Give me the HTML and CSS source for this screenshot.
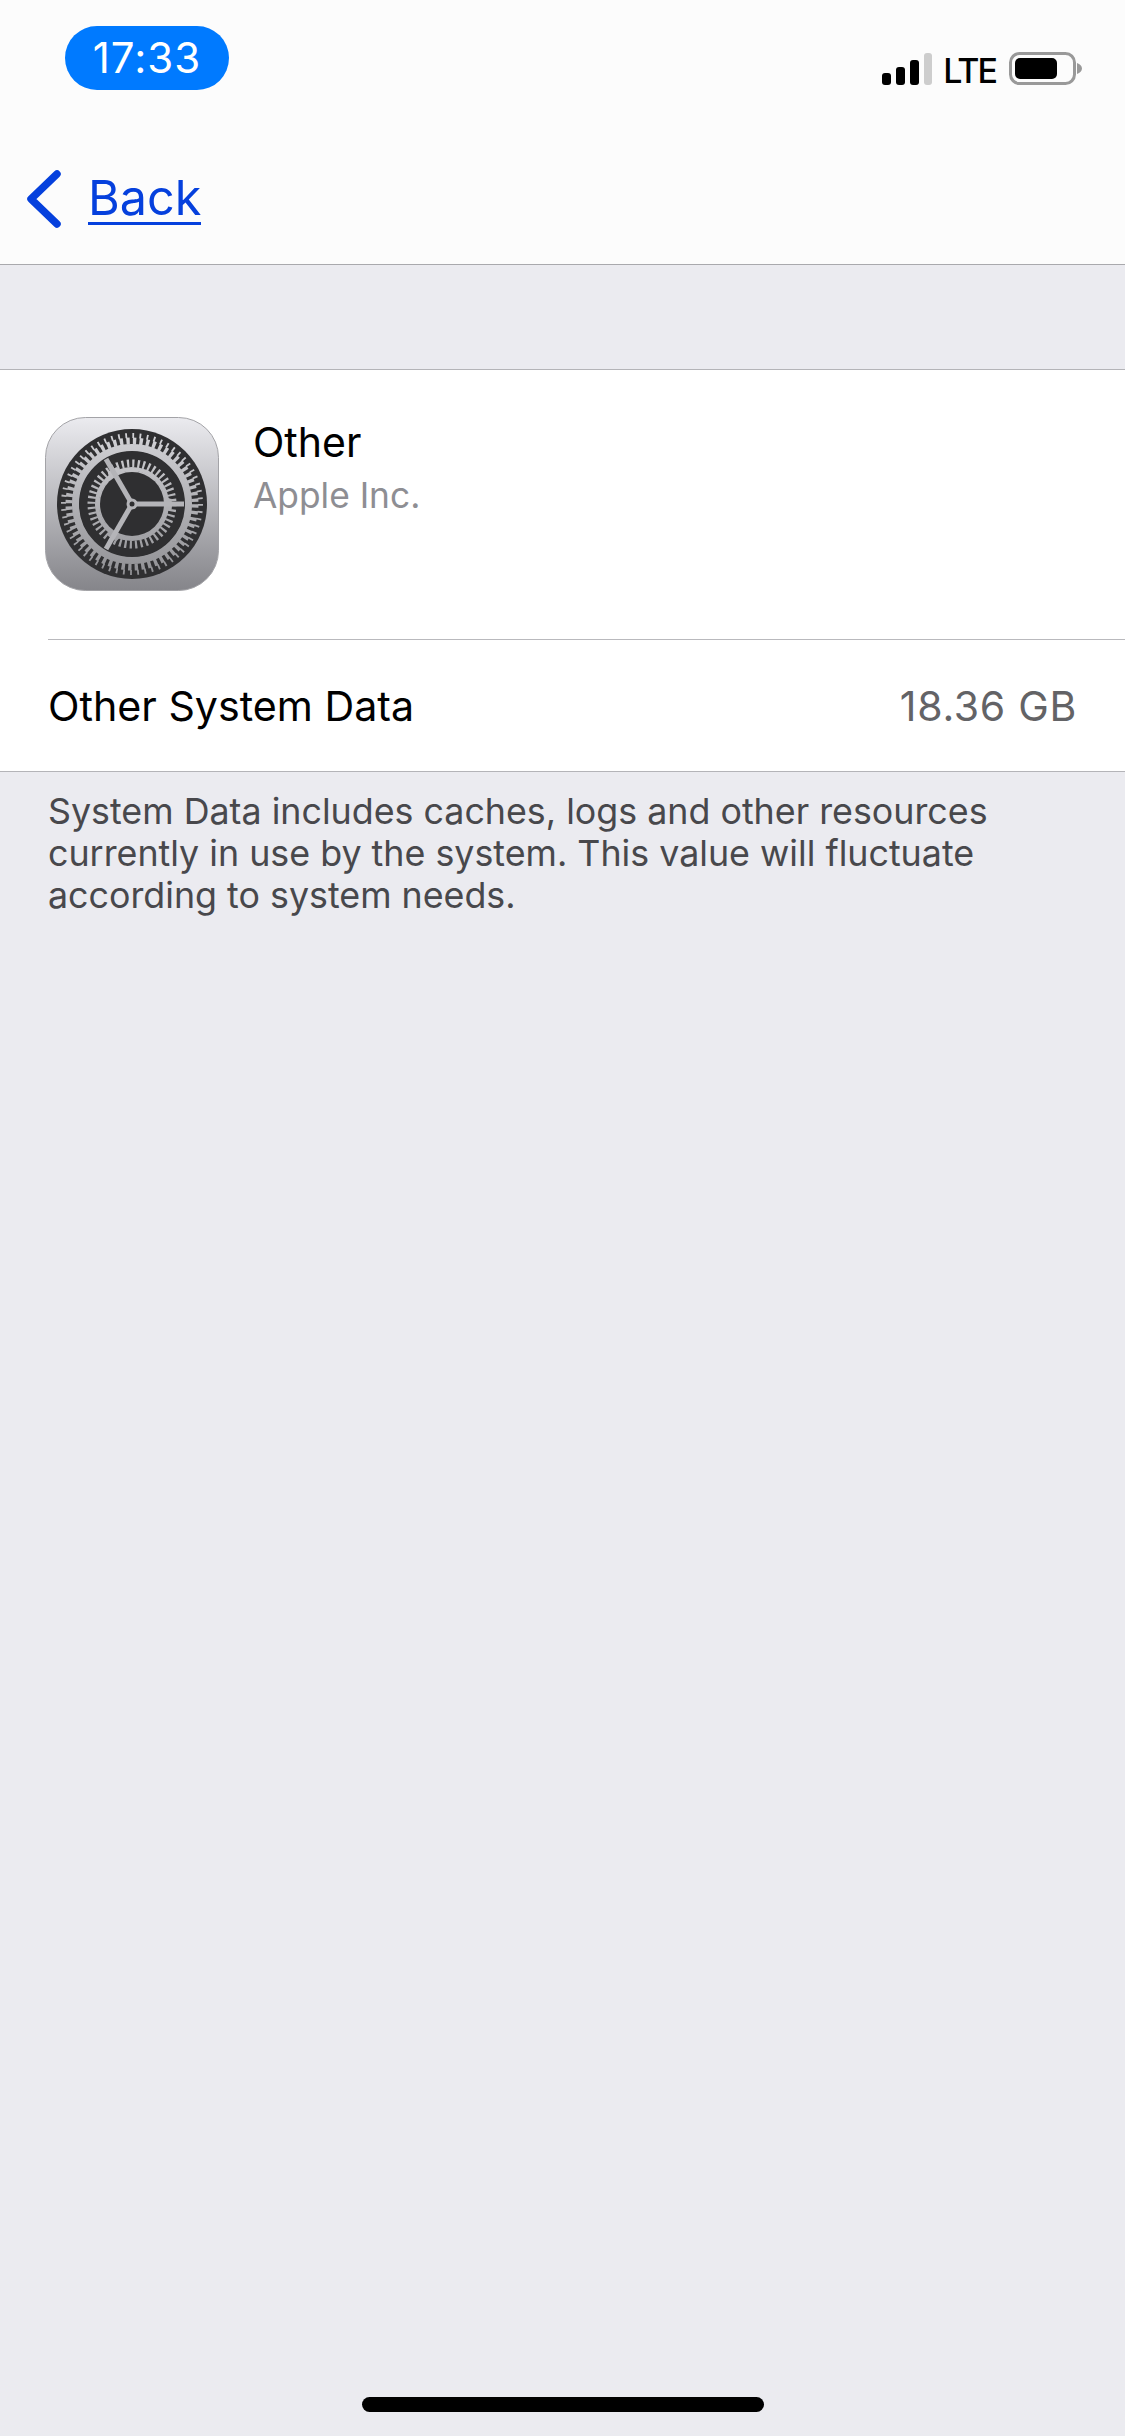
FILE: index.html
```html
<!DOCTYPE html>
<html lang="en">

<head>
    <meta charset="UTF-8">
    <meta name="viewport" content="width=device-width, initial-scale=1.0">
    <title>Other System Data</title>
    <link rel="stylesheet" href="styles.css">
</head>

<body>
    <div class="header">
        <!-- status bar -->
        <div class="status">
            <div class="time">17:33</div>
            <div class="status-right">
                <svg class="signal" width="50" height="32" viewBox="0 0 50 32">
                    <rect x="0" y="20" width="9" height="12" rx="3" fill="#000"></rect>
                    <rect x="14" y="14" width="9" height="18" rx="3" fill="#000"></rect>
                    <rect x="28" y="7" width="9" height="25" rx="3" fill="#000"></rect>
                    <rect x="42" y="0" width="8" height="32" rx="3" fill="#cdcdcd"></rect>
                </svg>
                <span class="lte">LTE</span>
                <svg class="battery" width="73" height="33" viewBox="0 0 73 33">
                    <rect x="1.5" y="1.5" width="64" height="30" rx="9" fill="none" stroke="#999" stroke-width="3"></rect>
                    <rect x="6" y="6" width="42" height="21" rx="5" fill="#000"></rect>
                    <path d="M68 11 C71 12 73 14 73 16.5 C73 19 71 21 68 22 Z" fill="#999"></path>
                </svg>
            </div>
        </div>
        <!-- nav -->
        <div class="nav">
            <svg class="chevron" width="34" height="58" viewBox="0 0 34 58">
                <path d="M30 4 L4 29 L30 54" fill="none" stroke="#0540dd" stroke-width="7.5" stroke-linecap="round" stroke-linejoin="round"></path>
            </svg>
            <a href="#" class="back">Back</a>
        </div>
    </div>

    <div class="gap"></div>

    <div class="card">
        <div class="app">
            <svg class="app-icon" width="174" height="174" viewBox="0 0 174 174">
                <defs>
                    <linearGradient id="tile" x1="0" y1="0" x2="0" y2="1">
                        <stop offset="0" stop-color="#ebebef"></stop>
                        <stop offset="1" stop-color="#85858a"></stop>
                    </linearGradient>
                    <linearGradient id="metal" gradientUnits="userSpaceOnUse" x1="0" y1="-75" x2="0" y2="75">
                        <stop offset="0" stop-color="#d4d4d8"></stop>
                        <stop offset="1" stop-color="#8f8f93"></stop>
                    </linearGradient>
                </defs>
                <rect x="0.5" y="0.5" width="173" height="173" rx="40" fill="url(#tile)" stroke="#a3a3a7"></rect>
                <g transform="translate(87 87)">
                    <circle r="75" fill="#2f2f31"></circle>
                    <!-- outer teeth, wide at the root and narrow at the tip -->
                    <circle r="68.5" fill="none" stroke="url(#metal)" stroke-width="5" stroke-dasharray="1.8 5.37"></circle>
                    <circle r="63" fill="none" stroke="url(#metal)" stroke-width="7" stroke-dasharray="3.4 3.2" stroke-dashoffset="-0.3"></circle>
                    <circle r="56.5" fill="none" stroke="url(#metal)" stroke-width="7"></circle>
                    <circle r="40" fill="url(#metal)"></circle>
                    <!-- dark slots between the spokes -->
                    <g fill="none" stroke="#2f2f31" stroke-width="19" stroke-linecap="round">
                        <path d="M-7.5 -42.3 A43 43 0 0 1 40.4 -14.7"></path>
                        <path d="M40.4 14.7 A43 43 0 0 1 -7.5 42.3"></path>
                        <path d="M-32.9 27.6 A43 43 0 0 1 -32.9 -27.6"></path>
                    </g>
                    <!-- inner teeth -->
                    <circle r="40.5" fill="none" stroke="url(#metal)" stroke-width="8" stroke-dasharray="2.2 3.1"></circle>
                    <circle r="35" fill="none" stroke="url(#metal)" stroke-width="4"></circle>
                    <circle r="32" fill="#2f2f31"></circle>
                    <!-- spokes -->
                    <g stroke="#b4b4b8" stroke-width="5">
                        <line x1="0" y1="0" x2="52" y2="0"></line>
                        <line x1="0" y1="0" x2="-26" y2="45"></line>
                        <line x1="0" y1="0" x2="-26" y2="-45"></line>
                    </g>
                    <circle r="5.5" fill="#b4b4b8"></circle>
                    <circle r="2.5" fill="#2f2f31"></circle>
                </g>
            </svg>
            <div class="app-text">
                <div class="app-name">Other</div>
                <div class="app-vendor">Apple Inc.</div>
            </div>
        </div>
        <div class="row">
            <span class="row-label">Other System Data</span>
            <span class="row-value">18.36 GB</span>
        </div>
    </div>

    <p class="note">System Data includes caches, logs and other resources currently in use by the system. This value will fluctuate according to system needs.</p>

    <div class="home-bar"></div>
</body>

</html>
```

FILE: styles.css
```css
* {
    padding: 0;
    margin: 0;
    box-sizing: border-box;
}

a {
    text-decoration: none;
}

body {
    display: flex;
    flex-direction: column;
    height: 2436px;
    background-color: #ebebf0;
    font-family: Inter, "Liberation Sans", sans-serif;
    color: #000;
    overflow: hidden;
}

.header {
    height: 265px;
    background-color: #fcfcfc;
    border-bottom: 1px solid #a9a9ad;
}

.status {
    display: flex;
    justify-content: space-between;
    height: 132px;
    padding: 26px 43px 0 65px;
}

.time {
    width: 164px;
    height: 64px;
    line-height: 64px;
    text-align: center;
    border-radius: 32px;
    background-color: #007aff;
    color: #fff;
    font-size: 42px;
    letter-spacing: 1px;
}

.status-right {
    display: flex;
    align-items: flex-start;
}

.signal {
    margin-top: 27px;
}

.lte {
    margin: 28px 0 0 11px;
    font-size: 34px;
    line-height: 34px;
    font-weight: 500;
    letter-spacing: -2px;
}

.battery {
    margin: 26px 0 0 13px;
}

.nav {
    display: flex;
    align-items: flex-start;
    padding: 38px 0 0 27px;
}

.back {
    margin: 3px 0 0 27px;
    font-size: 48.5px;
    line-height: 49px;
    color: #0540dd;
    border-bottom: 3px solid #0540dd;
}

.gap {
    height: 104px;
}

.card {
    background-color: #fff;
    border-top: 1px solid #b4b4b8;
    border-bottom: 1px solid #b4b4b8;
}

.app {
    display: flex;
    height: 269px;
    padding: 47px 0 0 45px;
}

.app-text {
    padding: 1px 0 0 34px;
}

.app-name {
    font-size: 41px;
    line-height: 48px;
}

.app-vendor {
    margin-top: 8px;
    font-size: 35.3px;
    line-height: 44px;
    color: #8e8e93;
}

.row {
    display: flex;
    justify-content: space-between;
    align-items: center;
    height: 132px;
    margin-left: 48px;
    padding-right: 48px;
    border-top: 1px solid #b9b9bd;
}

.row-label {
    font-size: 41.2px;
}

.row-value {
    font-size: 41px;
    letter-spacing: 0.7px;
    color: #636366;
}

.note {
    flex: 1;
    padding: 18px 48px 0 48px;
    font-size: 35.8px;
    line-height: 42px;
    color: #48484c;
}

.home-bar {
    width: 402px;
    height: 15px;
    margin: 0 auto 24px;
    border-radius: 8px;
    background-color: #000;
}
```
